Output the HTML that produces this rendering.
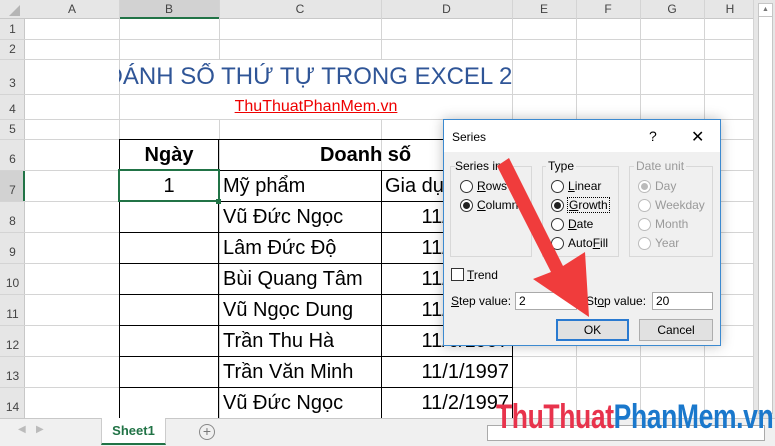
<!DOCTYPE html>
<html><head><meta charset="utf-8"><style>
*{margin:0;padding:0;box-sizing:border-box}
body{width:775px;height:446px;overflow:hidden;background:#fff;font-family:"Liberation Sans",sans-serif;position:relative}
.a{position:absolute}
.hl{position:absolute;height:1px;background:#d4d4d4}
.vl{position:absolute;width:1px;background:#d4d4d4}
.ch{position:absolute;top:0;height:19px;font-size:12px;color:#444;text-align:center;line-height:19px}
.rh{position:absolute;left:0;width:25px;font-size:12px;color:#444;text-align:center}
.cell{position:absolute;font-size:20px;color:#000;white-space:nowrap;overflow:hidden}
.bl{position:absolute;background:#000}
.dl{font-size:12px;color:#000;position:absolute;white-space:nowrap}
.rad{position:absolute;width:13px;height:13px;border:1px solid #333;border-radius:50%;background:#fff}
.rad.on::after{content:"";position:absolute;left:2px;top:2px;width:7px;height:7px;border-radius:50%;background:#222}
.rad.dis{border-color:#bbb}
.grp{position:absolute;border:1px solid #d8d8d8}
u{text-decoration:underline}
</style></head><body>
<div class="a" style="left:0;top:0;width:775px;height:19px;background:#e6e6e6;border-bottom:1px solid #c8c8c8"></div>
<div class="a" style="left:0;top:19px;width:25px;height:399px;background:#e6e6e6;border-right:1px solid #c8c8c8"></div>
<div class="a" style="left:119px;top:0;width:100px;height:19px;background:#d2d2d2;border-bottom:2px solid #217346"></div>
<div class="a" style="left:0;top:170px;width:25px;height:31px;background:#d2d2d2;border-right:2px solid #217346"></div>
<svg class="a" style="left:8px;top:5px" width="14" height="12"><polygon points="12,0 12,11 1,11" fill="#b5b5b5"/></svg>
<div class="ch" style="left:25px;width:94px">A</div>
<div class="ch" style="left:119px;width:100px">B</div>
<div class="ch" style="left:219px;width:162px">C</div>
<div class="ch" style="left:381px;width:131px">D</div>
<div class="ch" style="left:512px;width:64px">E</div>
<div class="ch" style="left:576px;width:64px">F</div>
<div class="ch" style="left:640px;width:64px">G</div>
<div class="ch" style="left:704px;width:52px">H</div>
<div class="vl" style="left:119px;top:0;height:418px"></div>
<div class="vl" style="left:219px;top:0;height:418px"></div>
<div class="vl" style="left:381px;top:0;height:418px"></div>
<div class="vl" style="left:512px;top:0;height:418px"></div>
<div class="vl" style="left:576px;top:0;height:418px"></div>
<div class="vl" style="left:640px;top:0;height:418px"></div>
<div class="vl" style="left:704px;top:0;height:418px"></div>
<div class="vl" style="left:753px;top:0;height:418px"></div>
<div class="hl" style="left:0;top:39px;width:754px"></div>
<div class="hl" style="left:0;top:59px;width:754px"></div>
<div class="hl" style="left:0;top:94px;width:754px"></div>
<div class="hl" style="left:0;top:119px;width:754px"></div>
<div class="hl" style="left:0;top:139px;width:754px"></div>
<div class="hl" style="left:0;top:170px;width:754px"></div>
<div class="hl" style="left:0;top:201px;width:754px"></div>
<div class="hl" style="left:0;top:232px;width:754px"></div>
<div class="hl" style="left:0;top:263px;width:754px"></div>
<div class="hl" style="left:0;top:294px;width:754px"></div>
<div class="hl" style="left:0;top:325px;width:754px"></div>
<div class="hl" style="left:0;top:356px;width:754px"></div>
<div class="hl" style="left:0;top:387px;width:754px"></div>
<div class="a" style="left:120px;top:60px;width:392px;height:34px;background:#fff"></div>
<div class="a" style="left:120px;top:95px;width:392px;height:24px;background:#fff"></div>
<div class="rh" style="top:19px;line-height:20px">1</div>
<div class="rh" style="top:39px;line-height:20px">2</div>
<div class="rh" style="top:59px;line-height:48px">3</div>
<div class="rh" style="top:94px;line-height:30px">4</div>
<div class="rh" style="top:119px;line-height:20px">5</div>
<div class="rh" style="top:139px;line-height:40px">6</div>
<div class="rh" style="top:170px;line-height:40px">7</div>
<div class="rh" style="top:201px;line-height:40px">8</div>
<div class="rh" style="top:232px;line-height:40px">9</div>
<div class="rh" style="top:263px;line-height:40px">10</div>
<div class="rh" style="top:294px;line-height:40px">11</div>
<div class="rh" style="top:325px;line-height:40px">12</div>
<div class="rh" style="top:356px;line-height:40px">13</div>
<div class="rh" style="top:387px;line-height:40px">14</div>
<div class="a" style="left:119px;top:63px;width:393px;height:30px;overflow:hidden"><div style="position:absolute;left:-50px;width:520px;text-align:center;font-size:24px;color:#2f5597;white-space:nowrap">ĐÁNH SỐ THỨ TỰ TRONG EXCEL 2016</div></div>
<div class="a" style="left:219px;top:98px;width:194px;text-align:center;font-size:16px;color:#e00;text-decoration:underline">ThuThuatPhanMem.vn</div>
<div class="bl" style="left:119px;top:139px;width:393px;height:1px"></div>
<div class="bl" style="left:119px;top:170px;width:393px;height:1px"></div>
<div class="bl" style="left:119px;top:201px;width:393px;height:1px"></div>
<div class="bl" style="left:119px;top:232px;width:393px;height:1px"></div>
<div class="bl" style="left:119px;top:263px;width:393px;height:1px"></div>
<div class="bl" style="left:119px;top:294px;width:393px;height:1px"></div>
<div class="bl" style="left:119px;top:325px;width:393px;height:1px"></div>
<div class="bl" style="left:119px;top:356px;width:393px;height:1px"></div>
<div class="bl" style="left:119px;top:387px;width:393px;height:1px"></div>
<div class="bl" style="left:119px;top:139px;width:1px;height:279px"></div>
<div class="bl" style="left:218px;top:139px;width:1px;height:279px"></div>
<div class="bl" style="left:381px;top:170px;width:1px;height:248px"></div>
<div class="bl" style="left:512px;top:139px;width:1px;height:279px"></div>
<div class="a" style="left:382px;top:140px;width:130px;height:30px;background:#fff"></div>
<div class="cell" style="left:119px;top:144px;width:100px;text-align:center;font-weight:bold">Ngày</div>
<div class="cell" style="left:219px;top:144px;width:293px;text-align:center;font-weight:bold">Doanh số</div>
<div class="a" style="left:118px;top:169px;width:102px;height:33px;border:2px solid #217346"></div>
<div class="a" style="left:216px;top:199px;width:5px;height:5px;background:#217346"></div>
<div class="cell" style="left:119px;top:175px;width:100px;text-align:center">1</div>
<div class="cell" style="left:223px;top:175px">Mỹ phẩm</div>
<div class="cell" style="left:385px;top:175px">Gia dụng</div>
<div class="cell" style="left:223px;top:206px">Vũ Đức Ngọc</div>
<div class="cell" style="left:223px;top:237px">Lâm Đức Độ</div>
<div class="cell" style="left:223px;top:268px">Bùi Quang Tâm</div>
<div class="cell" style="left:223px;top:299px">Vũ Ngọc Dung</div>
<div class="cell" style="left:223px;top:330px">Trần Thu Hà</div>
<div class="cell" style="left:223px;top:361px">Trần Văn Minh</div>
<div class="cell" style="left:223px;top:392px">Vũ Đức Ngọc</div>
<div class="cell" style="left:382px;top:206px;width:127px;text-align:right">11/2/1997</div>
<div class="cell" style="left:382px;top:237px;width:127px;text-align:right">11/3/1997</div>
<div class="cell" style="left:382px;top:268px;width:127px;text-align:right">11/4/1997</div>
<div class="cell" style="left:382px;top:299px;width:127px;text-align:right">11/5/1997</div>
<div class="cell" style="left:382px;top:330px;width:127px;text-align:right">11/6/1997</div>
<div class="cell" style="left:382px;top:361px;width:127px;text-align:right">11/1/1997</div>
<div class="cell" style="left:382px;top:392px;width:127px;text-align:right">11/2/1997</div>
<div class="a" style="left:754px;top:0;width:21px;height:418px;background:#e6e6e6"></div>
<div class="a" style="left:758px;top:3px;width:15px;height:411px;background:#fff;border:1px solid #c6c6c6"></div>
<div class="a" style="left:758px;top:3px;width:15px;height:14px;border-bottom:1px solid #c6c6c6;font-size:7px;color:#777;text-align:center;line-height:14px">▲</div>
<div class="a" style="left:0;top:418px;width:775px;height:28px;background:#f0f0f0;border-top:1px solid #c8c8c8"></div>
<div class="a" style="left:18px;top:424px;font-size:10px;color:#bbb">◀</div>
<div class="a" style="left:36px;top:424px;font-size:10px;color:#bbb">▶</div>
<div class="a" style="left:101px;top:418px;width:65px;height:27px;background:#fff;border-bottom:2px solid #217346;border-left:1px solid #ccc;border-right:1px solid #ccc;font-size:13px;font-weight:bold;color:#217346;text-align:center;line-height:26px">Sheet1</div>
<div class="a" style="left:199px;top:424px;width:16px;height:16px;border:1px solid #888;border-radius:50%;text-align:center;line-height:13px;font-size:14px;color:#777">+</div>
<div class="a" style="left:487px;top:425px;width:278px;height:16px;border:1px solid #aaa;background:#fff"></div>
<div class="a" style="left:496px;top:398px;font-size:34px;font-weight:bold;white-space:nowrap;transform:scaleX(0.78);transform-origin:left top;letter-spacing:-0.5px"><span style="color:#e8334c">ThuThuat</span><span style="color:#1a78cc">PhanMem.vn</span></div>
<div class="a" style="left:443px;top:119px;width:278px;height:227px;background:#f0f0f0;border:1px solid #3c8ad0;box-shadow:0 0 12px rgba(0,0,0,0.25)"></div>
<div class="a" style="left:444px;top:120px;width:276px;height:32px;background:#fff"></div>
<div class="dl" style="left:452px;top:130px">Series</div>
<div class="dl" style="left:649px;top:128px;font-size:14px">?</div>
<div class="dl" style="left:691px;top:127px;font-size:16px">✕</div>
<div class="grp" style="left:450px;top:166px;width:82px;height:91px"></div>
<div class="grp" style="left:542px;top:166px;width:77px;height:91px"></div>
<div class="grp" style="left:629px;top:166px;width:84px;height:91px"></div>
<div class="dl" style="left:455px;top:159px;background:#f0f0f0;padding-right:2px">Series in</div>
<div class="dl" style="left:546px;top:159px;background:#f0f0f0;padding:0 2px">Type</div>
<div class="dl" style="left:634px;top:159px;background:#f0f0f0;padding:0 2px;color:#999">Date unit</div>
<div class="rad" style="left:460px;top:180px"></div><div class="dl" style="left:477px;top:179px"><u>R</u>ows</div>
<div class="rad on" style="left:460px;top:199px"></div><div class="dl" style="left:477px;top:198px"><u>C</u>olumns</div>
<div class="rad" style="left:551px;top:180px"></div><div class="dl" style="left:568px;top:179px"><u>L</u>inear</div>
<div class="rad on" style="left:551px;top:199px"></div><div class="dl" style="left:567px;top:197px;border:1px dotted #000;padding:0 1px"><u>G</u>rowth</div>
<div class="rad" style="left:551px;top:218px"></div><div class="dl" style="left:568px;top:217px"><u>D</u>ate</div>
<div class="rad" style="left:551px;top:237px"></div><div class="dl" style="left:568px;top:236px">Auto<u>F</u>ill</div>
<div class="rad dis" style="left:638px;top:180px;background:#fff"></div><div class="a" style="left:641px;top:183px;width:7px;height:7px;border-radius:50%;background:#bbb"></div><div class="dl" style="left:655px;top:179px;color:#999">Day</div>
<div class="rad dis" style="left:638px;top:199px"></div><div class="dl" style="left:655px;top:198px;color:#999">Weekday</div>
<div class="rad dis" style="left:638px;top:218px"></div><div class="dl" style="left:655px;top:217px;color:#999">Month</div>
<div class="rad dis" style="left:638px;top:237px"></div><div class="dl" style="left:655px;top:236px;color:#999">Year</div>
<div class="a" style="left:451px;top:268px;width:13px;height:13px;border:1px solid #333;background:#fff"></div>
<div class="dl" style="left:467px;top:268px"><u>T</u>rend</div>
<div class="dl" style="left:451px;top:294px"><u>S</u>tep value:</div>
<div class="a" style="left:515px;top:292px;width:62px;height:18px;border:1px solid #aaa;background:#fff;font-size:12px;padding:1px 3px">2</div>
<div class="dl" style="left:586px;top:294px">St<u>o</u>p value:</div>
<div class="a" style="left:652px;top:292px;width:61px;height:18px;border:1px solid #aaa;background:#fff;font-size:12px;padding:1px 3px">20</div>
<div class="a" style="left:556px;top:319px;width:73px;height:22px;border:2px solid #2a7ad0;background:#e1e1e1;font-size:12px;text-align:center;line-height:18px">OK</div>
<div class="a" style="left:639px;top:319px;width:74px;height:22px;border:1px solid #adadad;background:#e1e1e1;font-size:12px;text-align:center;line-height:20px">Cancel</div>
<svg class="a" style="left:0;top:0" width="775" height="446"><polygon points="497,166 509,158 563,266 585,252 589,317 533,279 551,272" fill="#f03c3c"/></svg>
</body></html>
